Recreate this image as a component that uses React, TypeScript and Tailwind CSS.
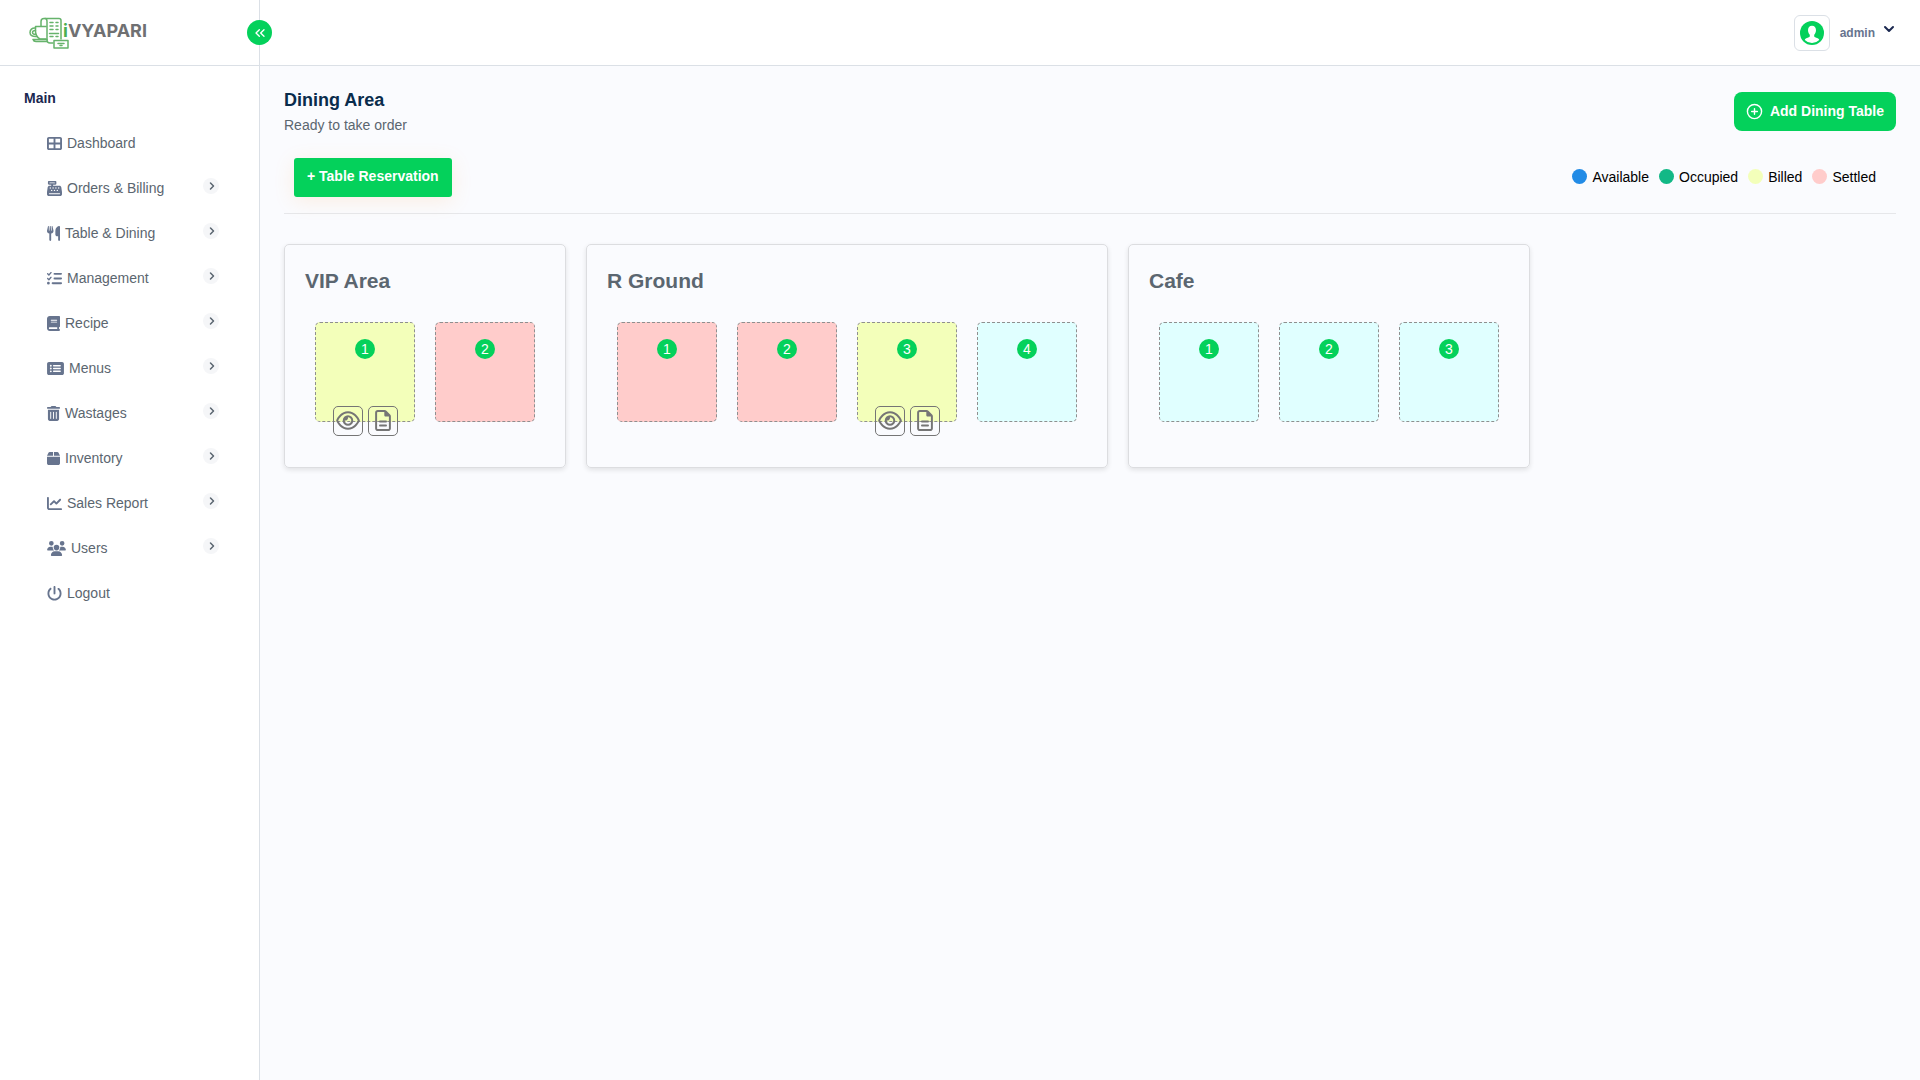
import type { ReactNode } from "react";
import type { IconType } from "react-icons";
import {
  FaTableCellsLarge,
  FaCashRegister,
  FaUtensils,
  FaListCheck,
  FaBook,
  FaRectangleList,
  FaTrashCan,
  FaBox,
  FaChartLine,
  FaUsers,
  FaPowerOff,
  FaRegEye,
  FaRegFileLines,
} from "react-icons/fa6";
import { ChevronRight, ChevronDown, ChevronsLeft, CirclePlus } from "lucide-react";

type NavEntry = { label: string; icon: IconType; width: string; expandable: boolean };

const navEntries: NavEntry[] = [
  { label: "Dashboard", icon: FaTableCellsLarge, width: "w-[15px]", expandable: false },
  { label: "Orders & Billing", icon: FaCashRegister, width: "w-[15px]", expandable: true },
  { label: "Table & Dining", icon: FaUtensils, width: "w-[13px]", expandable: true },
  { label: "Management", icon: FaListCheck, width: "w-[15px]", expandable: true },
  { label: "Recipe", icon: FaBook, width: "w-[13px]", expandable: true },
  { label: "Menus", icon: FaRectangleList, width: "w-[17px]", expandable: true },
  { label: "Wastages", icon: FaTrashCan, width: "w-[13px]", expandable: true },
  { label: "Inventory", icon: FaBox, width: "w-[13px]", expandable: true },
  { label: "Sales Report", icon: FaChartLine, width: "w-[15px]", expandable: true },
  { label: "Users", icon: FaUsers, width: "w-[19px]", expandable: true },
  { label: "Logout", icon: FaPowerOff, width: "w-[15px]", expandable: false },
];

type Status = "available" | "billed" | "settled";

const tileColors: Record<Status, string> = {
  available: "bg-[#e0ffff]",
  billed: "bg-[#f3ffba]",
  settled: "bg-[#ffcccb]",
};

const areas: { name: string; tables: Status[] }[] = [
  { name: "VIP Area", tables: ["billed", "settled"] },
  { name: "R Ground", tables: ["settled", "settled", "billed", "available"] },
  { name: "Cafe", tables: ["available", "available", "available"] },
];

const legend = [
  { label: "Available", color: "bg-[#228be6]" },
  { label: "Occupied", color: "bg-[#12b886]" },
  { label: "Billed", color: "bg-[#f3ffba]" },
  { label: "Settled", color: "bg-[#ffcccb]" },
];

function Logo() {
  return (
    <a href="#" className="flex items-center" aria-label="iVYAPARI">
      <svg width="40" height="32" viewBox="0 0 40 32" fill="none" stroke="#66b36b" strokeWidth="1.5" strokeLinejoin="round" strokeLinecap="round">
        <path d="M12 9V4.500a3 3 0 0 1 3-3h15a2 2 0 0 1 2 2V22" />
        <path d="M16 1.500c1.500 0 2 1.500 2 3V23a3 3 0 0 0 3 3h3" />
        <path d="M17 9.500H6.500V14c0 3.500 1.500 6.500 4.500 8h6" />
        <path d="M6.500 11C3 10.500 1 13 1 15.500S3 20 8 19.500" />
        <path d="M6.500 13.500c-2 0-3 .8-3 2s1 2 3.300 1.800" />
        <path d="M4 22.500h14M4 22.500c.5 1.500 1.500 2 3 2h11" />
        <path d="M21 5.500h3M27 5.500h2M21 9h3M27 9h2M21 12.500h3M27 12.500h2M20.500 16.500h9M21 19.500h3M27 19.500h2" />
        <path d="M25 23.500h14v7.500H25z" fill="#fff" />
        <path d="M29 26.500h6M31 28.500h2" />
      </svg>
      <span className="-ml-1.5 pb-1 font-[Inter,sans-serif] text-[18px] leading-6 font-bold text-[#6f7072]">
        <span className="text-[#4caf50]">i</span>VYAPARI
      </span>
    </a>
  );
}

function UserAvatar() {
  return (
    <svg width="24" height="24" viewBox="0 0 24 24">
      <circle cx="12" cy="12" r="12" fill="#04d15b" />
      <path
        fill="#fff"
        d="M12 4.800c2.600 0 4 1.900 4 4.400 0 1.900-.8 3.500-1.800 4.500v1.500c0 .8 1.300 1.200 2.700 1.700 1.200.4 2.200 1 2.300 2.100A10 10 0 0 1 12 22a10 10 0 0 1-7.200-3c.1-1.100 1.100-1.700 2.300-2.100 1.400-.5 2.700-.9 2.700-1.700v-1.500C8.800 12.700 8 11.100 8 9.200c0-2.500 1.400-4.400 4-4.400z"
      />
    </svg>
  );
}

function Header() {
  return (
    <header className="flex h-[66px] border-b border-[#dbe0e6] bg-white">
      <div className="relative flex w-[260px] shrink-0 items-center border-r border-[#dbe0e6] pl-[29px]">
        <Logo />
        <button
          type="button"
          aria-label="Collapse menu"
          className="absolute top-5 -right-[13px] flex size-[25px] items-center justify-center rounded-full bg-[#04d15b] text-white"
        >
          <ChevronsLeft size={16} strokeWidth={2} />
        </button>
      </div>
      <button type="button" className="mr-[23px] ml-auto flex items-center text-[12px] font-bold text-[#67748e]">
        <span className="mr-2.5 flex size-9 items-center justify-center rounded-md border border-[#dbe0e6]">
          <UserAvatar />
        </span>
        admin
        <ChevronDown size={16} strokeWidth={3} className="mb-2 ml-1.5 text-[#1b2850]" />
      </button>
    </header>
  );
}

function Sidebar() {
  return (
    <aside className="w-[260px] shrink-0 border-r border-[#dbe0e6] bg-white pt-[22px]">
      <h2 className="pl-6 text-[14px] leading-5 font-bold text-[#1b2850]">Main</h2>
      <nav className="mt-[13px]">
        <ul>
          {navEntries.map(({ label, icon: Icon, width, expandable }) => (
            <li key={label}>
              <a href="#" className="flex h-[45px] items-center gap-[5px] pr-10 pl-[47px] text-[14px] text-[#5b6670]">
                <Icon className={`h-[15px] shrink-0 text-[#67748e] ${width}`} />
                {label}
                {expandable && (
                  <span className="mb-1.5 ml-auto flex size-4 items-center justify-center rounded-full bg-[#f5f6f8] pl-0.5">
                    <ChevronRight size={12} strokeWidth={3} className="shrink-0" />
                  </span>
                )}
              </a>
            </li>
          ))}
        </ul>
      </nav>
    </aside>
  );
}

function ActionButton({ label, children }: { label: string; children: ReactNode }) {
  return (
    <button
      type="button"
      aria-label={label}
      className="flex size-[30px] items-center justify-center rounded-[5px] border border-[#757575] pr-px pb-px text-[#757575]"
    >
      {children}
    </button>
  );
}

function TableTile({ number, status }: { number: number; status: Status }) {
  return (
    <div className={`relative flex size-[100px] justify-center rounded-[5px] border border-dashed border-[#8f8f8f] pt-4 ${tileColors[status]}`}>
      <span className="flex size-5 items-center justify-center rounded-full bg-[#04d15b] text-[14px] leading-5 text-white">{number}</span>
      {status === "billed" && (
        <div className="absolute -bottom-[15px] left-[17px] flex gap-[5px]">
          <ActionButton label={`View table ${number}`}>
            <FaRegEye className="h-[21px] w-6 shrink-0" />
          </ActionButton>
          <ActionButton label={`Bill for table ${number}`}>
            <FaRegFileLines className="h-[21px] w-4 shrink-0" />
          </ActionButton>
        </div>
      )}
    </div>
  );
}

export default function App() {
  return (
    <div className="flex min-h-screen flex-col bg-[#fafbfe] font-['Liberation_Sans',Arial,sans-serif]">
      <Header />
      <div className="flex flex-1">
        <Sidebar />
        <main className="min-w-0 flex-1 px-6 pt-6">
          <div className="flex items-start justify-between">
            <div>
              <h1 className="text-[18px] leading-5 font-bold text-[#092c4c]">Dining Area</h1>
              <p className="mt-[5px] text-[14px] leading-5 text-[#5b6670]">Ready to take order</p>
            </div>
            <button
              type="button"
              className="mt-0.5 flex h-[39px] items-center gap-[7px] rounded-lg bg-[#04d15b] px-3 text-[14px] font-bold text-white"
            >
              <CirclePlus size={17} strokeWidth={2} />
              Add Dining Table
            </button>
          </div>

          <div className="mt-[23px] flex items-center justify-between border-b border-[#e6e7ea] pr-5 pb-4 pl-2.5">
            <button
              type="button"
              className="h-[39px] rounded-[3px] bg-[#04d15b] px-[13px] pb-0.5 text-[14px] font-bold text-white shadow-[0_4px_20px_rgba(255,159,67,0.15)]"
            >
              + Table Reservation
            </button>
            <ul className="flex gap-2.5 pb-0.5 text-[14px] leading-5 text-black">
              {legend.map(({ label, color }) => (
                <li key={label} className="flex items-center gap-[5px]">
                  <span className={`size-[15px] rounded-full ${color}`} />
                  {label}
                </li>
              ))}
            </ul>
          </div>

          <div className="mt-[30px] flex flex-wrap gap-5">
            {areas.map(({ name, tables }) => (
              <section key={name} className="rounded-[5px] border border-[#dcdde0] px-5 pt-5 pb-[45px] shadow-[0_2px_5px_rgba(0,0,0,0.1)]">
                <h2 className="text-[21px] leading-8 font-bold text-[#5b6670]">{name}</h2>
                <div className="mt-[25px] flex gap-5 px-2.5">
                  {tables.map((status, index) => (
                    <TableTile key={index} number={index + 1} status={status} />
                  ))}
                </div>
              </section>
            ))}
          </div>
        </main>
      </div>
    </div>
  );
}
